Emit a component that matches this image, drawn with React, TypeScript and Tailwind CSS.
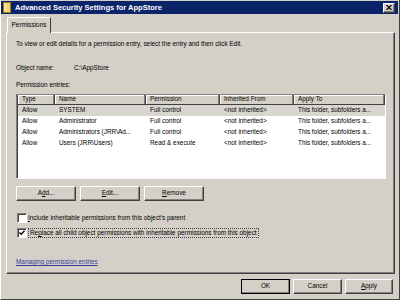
const raised =
  "bg-[#d4d0c8] border border-t-white border-l-white border-r-[#404040] border-b-[#404040] shadow-[inset_-1px_-1px_0_#808080]";
const sunken =
  "border border-t-[#808080] border-l-[#808080] border-r-white border-b-white shadow-[inset_1px_1px_0_#404040]";

const columns = [
  { label: "Type", w: "w-[37px]" },
  { label: "Name", w: "w-[91px]" },
  { label: "Permission", w: "w-[74px]" },
  { label: "Inherited From", w: "w-[74px]" },
  { label: "Apply To", w: "flex-1" },
];

const entries = [
  ["Allow", "SYSTEM", "Full control", "<not inherited>", "This folder, subfolders a..."],
  ["Allow", "Administrator", "Full control", "<not inherited>", "This folder, subfolders a..."],
  ["Allow", "Administrators (JRR\\Ad...", "Full control", "<not inherited>", "This folder, subfolders a..."],
  ["Allow", "Users (JRR\\Users)", "Read & execute", "<not inherited>", "This folder, subfolders a..."],
];

const Btn = ({ children, w, def }: { children: React.ReactNode; w: string; def?: boolean }) => (
  <div className={`${w} h-[15px] ${def ? "outline outline-1 outline-black -outline-offset-1" : ""}`}>
    <div className={`${raised} h-full w-full flex items-center justify-center leading-none`}>{children}</div>
  </div>
);

const CheckBox = ({ checked }: { checked?: boolean }) => (
  <div className={`${sunken} bg-white w-[10px] h-[10px] ml-[1px] shrink-0 flex items-center justify-center`}>
    {checked && (
      <svg width="6" height="6" viewBox="0 0 6 6">
        <path d="M0.5 2.5 L2.2 4.3 L5.5 0.8" stroke="#000" strokeWidth="1.3" fill="none" />
      </svg>
    )}
  </div>
);

export default function App() {
  return (
    <div className="w-[400px] h-[300px] bg-[#d4d0c8] border-r border-b border-[#404040] border-l border-l-white flex flex-col text-black text-[6.4px] font-['Liberation_Sans',Arial,sans-serif] overflow-hidden">
      {/* title bar */}
      <div className="mt-[1px] mr-[1px] h-[13px] bg-[#0a246a] flex items-center pl-[2px] pr-[3px] gap-[4px]">
        <svg width="8" height="11" viewBox="0 0 8 11">
          <rect x="0.5" y="0.5" width="7" height="10" fill="#f2d36b" stroke="#a07a1a" />
          <rect x="1.5" y="1.5" width="2" height="8" fill="#fbe9a8" />
        </svg>
        <span className="text-white font-bold text-[7.5px] leading-none">Advanced Security Settings for AppStore</span>
        <div className={`${raised} ml-auto w-[12px] h-[10px] flex items-center justify-center`}>
          <svg width="6" height="5" viewBox="0 0 6 5">
            <path d="M0.5 0 L5.5 5 M5.5 0 L0.5 5" stroke="#000" strokeWidth="1.2" />
          </svg>
        </div>
      </div>

      {/* tab */}
      <div className="mt-[3px] pl-[6px] flex">
        <div className="relative z-10 -mb-[1px] w-[44px] h-[16px] bg-[#d4d0c8] border border-b-0 border-t-white border-l-white border-r-[#404040] flex items-center justify-center leading-none">
          Permissions
        </div>
      </div>

      {/* panel */}
      <div className="ml-[5px] w-[389px] h-[242px] border border-t-white border-l-white border-r-[#404040] border-b-[#404040] shadow-[inset_-1px_-1px_0_#808080] pl-[9px] flex flex-col">
        <div className="mt-[7px] h-[8px] leading-[8px]">
          To view or edit details for a permission entry, select the entry and then click Edit.
        </div>
        <div className="mt-[16px] h-[8px] leading-[8px] flex">
          <span className="w-[58px]">Object name:</span>
          <span>C:\AppStore</span>
        </div>
        <div className="mt-[9px] h-[8px] leading-[8px]">Permission entries:</div>

        {/* list */}
        <div className={`${sunken} mt-[5px] w-[370px] h-[85px] bg-white flex flex-col`}>
          <div className="ml-[1px] h-[10px] bg-[#d4d0c8] flex border-b border-[#404040]">
            {columns.map((c) => (
              <div
                key={c.label}
                className={`${c.w} h-full flex items-center pl-[4px] border-r border-[#404040] shadow-[inset_-1px_0_0_#808080,inset_1px_1px_0_#fff] leading-none`}
              >
                {c.label}
              </div>
            ))}
          </div>
          {entries.map((row, i) => (
            <div key={i} className={`ml-[1px] h-[11px] flex items-center ${i === 0 ? "bg-[#d9d6d0]" : ""}`}>
              {row.map((cell, j) => (
                <div key={j} className={`${columns[j].w} pl-[4px] leading-none whitespace-nowrap overflow-hidden`}>
                  {cell}
                </div>
              ))}
            </div>
          ))}
        </div>

        {/* action buttons */}
        <div className="mt-[7px] flex gap-[4px]">
          <Btn w="w-[60px]">
            A<u>d</u>d...
          </Btn>
          <Btn w="w-[60px]">
            <u>E</u>dit...
          </Btn>
          <Btn w="w-[60px]">
            <u>R</u>emove
          </Btn>
        </div>

        <div className="mt-[12px] h-[10px] flex items-center gap-[1px]">
          <CheckBox />
          <span className="leading-none">
            <u>I</u>nclude inheritable permissions from this object's parent
          </span>
        </div>
        <div className="mt-[5px] h-[10px] flex items-center gap-[1px]">
          <CheckBox checked />
          <span className="leading-[8px] border border-dotted border-[#404040] px-[1px]">
            Re<u>p</u>lace all child object permissions with inheritable permissions from this object
          </span>
        </div>

        <div className="mt-[20px] h-[8px] leading-[8px]">
          <span className="text-[#3c3c9c] underline">Managing permission entries</span>
        </div>
      </div>

      {/* dialog buttons */}
      <div className="mt-[5px] pr-[6px] flex justify-end gap-[3px]">
        <Btn w="w-[49px]" def>
          OK
        </Btn>
        <Btn w="w-[49px]">Cancel</Btn>
        <Btn w="w-[48px]">
          <u>A</u>pply
        </Btn>
      </div>
    </div>
  );
}
